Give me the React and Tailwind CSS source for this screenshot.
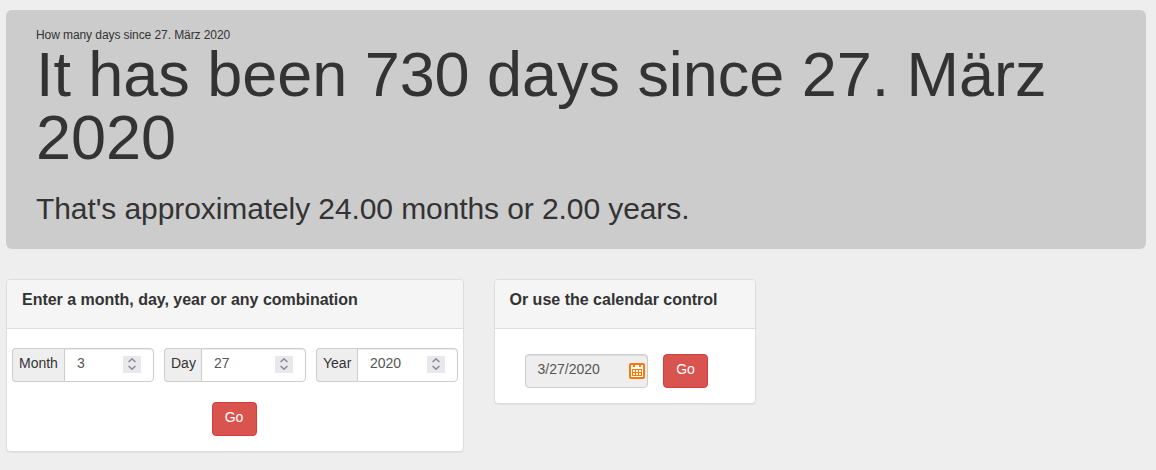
import React, { useState } from "react";

function Spinner() {
  return (
    <span className="mb-px flex h-[17px] w-[18px] items-center justify-center bg-[#e9e9ed]">
      <svg width="18" height="17" viewBox="0 0 18 17" fill="none" stroke="#8f8f9d" strokeWidth="1.6">
        <path d="M5.5 6L9 2.8L12.5 6" />
        <path d="M5.5 10L9 13.2L12.5 10" />
      </svg>
    </span>
  );
}

function NumberField({ label, labelClass, value, onChange }) {
  return (
    <label className="flex h-[34px] w-[142px]">
      <span className={`flex shrink-0 items-center rounded-l border border-r-0 border-[#ccc] bg-[#eee] pb-[3px] pl-[6px] text-[14px] text-[#333] ${labelClass}`}>
        {label}
      </span>
      <span className="flex min-w-0 flex-1 items-center rounded-r border border-[#ccc] bg-white pr-3 pl-3 shadow-[inset_0_1px_1px_rgba(0,0,0,0.075)]">
        <input
          className="min-w-0 flex-1 bg-transparent pb-[4px] text-[14px] leading-5 text-[#555] outline-none"
          value={value}
          onChange={(e) => onChange(e.target.value)}
        />
        <Spinner />
      </span>
    </label>
  );
}

function GoButton() {
  return (
    <button
      type="submit"
      className="h-[34px] w-[45px] rounded border border-[#d43f3a] bg-[#d9534f] pb-[4px] text-[14px] leading-5 text-white"
    >
      Go
    </button>
  );
}

function CalendarIcon() {
  return (
    <svg width="16" height="16" viewBox="0 0 16 16">
      <rect width="16" height="16" rx="2" fill="#ff7800" />
      <path d="M2 2H4V4H6V2H10V4H12V2H14V14H2Z" fill="#fff" />
      <path d="M3 6H13V13H3Z" fill="#ff7800" />
      <path d="M4 7h2v2H4zM7 7h2v2H7zM10 7h2v2h-2zM4 10h2v2H4zM7 10h2v2H7zM10 10h2v2h-2z" fill="#fff" />
    </svg>
  );
}

function Panel({ title, className, titleClass, children }) {
  return (
    <section className={`rounded border border-[#ddd] bg-white shadow-[0_1px_1px_rgba(0,0,0,0.05)] ${className}`}>
      <h3 className={`h-[49px] rounded-t border-b border-[#ddd] bg-[#f5f5f5] pt-[10px] text-[16px] leading-5 font-bold ${titleClass}`}>
        {title}
      </h3>
      {children}
    </section>
  );
}

function App() {
  const [month, setMonth] = useState("3");
  const [day, setDay] = useState("27");
  const [year, setYear] = useState("2020");

  const handleSubmit = (e) => e.preventDefault();

  return (
    <div className="min-h-[470px] bg-[#eee] pt-[10px] pr-[10px] pl-[6px] font-['Liberation_Sans',Arial,sans-serif] text-[#333]">
      <header className="h-[239px] rounded-md bg-[#ccc] px-[30px] pt-[17px]">
        <p className="text-[12px] leading-4 tracking-[-0.08px]">How many days since 27. März 2020</p>
        <h1 className="text-[63px] leading-[63px] tracking-[-0.05px]">It has been 730 days since 27. März 2020</h1>
        <h2 className="mt-[23px] text-[30px] leading-[33px] tracking-[-0.09px]">That's approximately 24.00 months or 2.00 years.</h2>
      </header>

      <main className="mt-[30px] flex items-start gap-[30px]">
        <Panel
          title="Enter a month, day, year or any combination"
          className="h-[173px] w-[458px]"
          titleClass="pl-[15px] tracking-[-0.02px]"
        >
          <form className="flex flex-col items-center pt-[19px]" onSubmit={handleSubmit}>
            <div className="flex gap-[10px]">
              <NumberField label="Month" labelClass="w-[52px]" value={month} onChange={setMonth} />
              <NumberField label="Day" labelClass="w-[37px]" value={day} onChange={setDay} />
              <NumberField label="Year" labelClass="w-[41px]" value={year} onChange={setYear} />
            </div>
            <div className="mt-5 mr-[2px]">
              <GoButton />
            </div>
          </form>
        </Panel>

        <Panel title="Or use the calendar control" className="h-[125px] w-[262px]" titleClass="pl-[14.5px]">
          <form className="flex gap-[15px] pt-[25px] pl-[30px]" onSubmit={handleSubmit}>
            <div className="flex h-[34px] w-[123px] items-center rounded border border-[#ccc] bg-[#eee] pr-[2px] pl-[11.5px] shadow-[inset_0_1px_1px_rgba(0,0,0,0.075)]">
              <span className="flex-1 pb-[3px] text-[14px] text-[#555]">3/27/2020</span>
              <CalendarIcon />
            </div>
            <GoButton />
          </form>
        </Panel>
      </main>
    </div>
  );
}

export default App;
